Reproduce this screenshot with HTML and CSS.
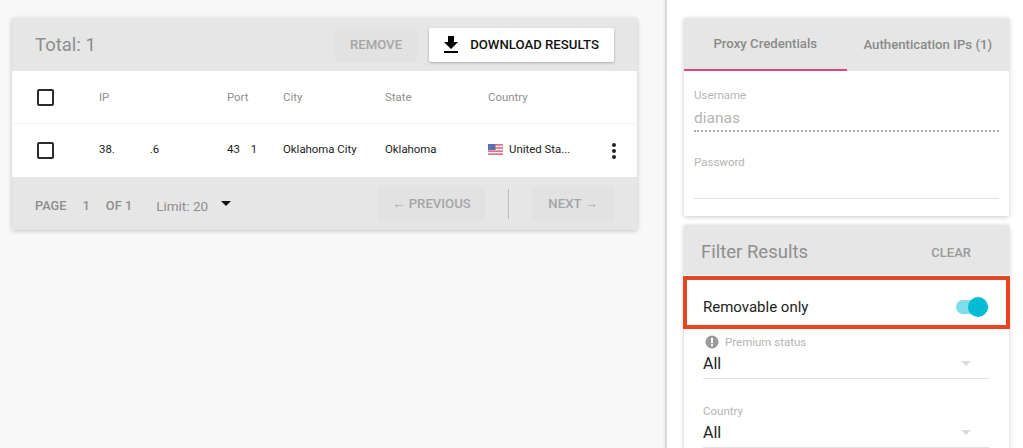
FILE: index.html
```html
<!DOCTYPE html>
<html lang="en">
<head>
    <meta charset="UTF-8">
    <meta name="viewport" content="width=device-width, initial-scale=1.0">
    <title>Proxies</title>
    <link rel="stylesheet" href="styles.css">
</head>
<body>
    <div class="layout">
        <main class="content">
            <div class="card results">
                <div class="results-head">
                    <span class="total">Total: 1</span>
                    <span class="btn btn-disabled btn-remove">REMOVE</span>
                    <span class="btn btn-download">
                        <svg class="download-icon" width="14" height="17" viewBox="0 0 14 17"><path d="M4 0h6v6h4l-7 7-7-7h4z"/><rect y="15" width="14" height="2"/></svg>
                        DOWNLOAD RESULTS
                    </span>
                </div>

                <div class="row row-head">
                    <span class="checkbox"></span>
                    <span>IP</span>
                    <span>Port</span>
                    <span>City</span>
                    <span>State</span>
                    <span>Country</span>
                </div>
                <div class="row row-body">
                    <span class="checkbox"></span>
                    <span class="ip"><span>38.</span><span>.6</span></span>
                    <span class="port"><span>43</span><span>1</span></span>
                    <span>Oklahoma City</span>
                    <span>Oklahoma</span>
                    <span class="country">
                        <svg class="flag" width="15" height="11" viewBox="0 0 15 11">
                            <rect width="15" height="11" fill="#eef0f4"/>
                            <rect y="0" width="15" height="1.6" fill="#e0707c"/>
                            <rect y="3.2" width="15" height="1.6" fill="#e0707c"/>
                            <rect y="6.4" width="15" height="1.6" fill="#e0707c"/>
                            <rect y="9.4" width="15" height="1.6" fill="#e0707c"/>
                            <rect width="7.5" height="6" fill="#5a6fb5"/>
                        </svg>
                        United Sta...
                    </span>
                    <span class="dots"><i></i><i></i><i></i></span>
                </div>

                <div class="results-foot">
                    <span class="page-label">PAGE</span>
                    <span class="page-label page-num">1</span>
                    <span class="page-label">OF 1</span>
                    <span class="limit">Limit: 20</span>
                    <span class="caret"></span>
                    <span class="btn btn-disabled btn-prev">← PREVIOUS</span>
                    <span class="foot-sep"></span>
                    <span class="btn btn-disabled btn-next">NEXT →</span>
                </div>
            </div>
        </main>

        <aside class="sidebar">
            <div class="card credentials">
                <div class="tabs">
                    <span class="tab tab-active">Proxy Credentials</span>
                    <span class="tab">Authentication IPs (1)</span>
                </div>
                <div class="cred-body">
                    <div class="cred-label">Username</div>
                    <div class="cred-value">dianas</div>
                    <div class="cred-label cred-label-pass">Password</div>
                    <div class="cred-line"></div>
                </div>
            </div>

            <div class="card filters">
                <div class="filter-head">
                    <span class="filter-title">Filter Results</span>
                    <span class="filter-clear">CLEAR</span>
                </div>
                <div class="highlight">
                    <span>Removable only</span>
                    <span class="toggle"><span class="toggle-knob"></span></span>
                </div>
                <div class="field field-first">
                    <div class="field-label">
                        <svg width="14" height="14" viewBox="0 0 14 14"><circle cx="7" cy="7" r="6.5" fill="#9a9a9a"/><rect x="6" y="3" width="2" height="5.2" fill="#fff"/><rect x="6" y="9.2" width="2" height="2" fill="#fff"/></svg>
                        Premium status
                    </div>
                    <div class="field-value">All<span class="field-caret"></span></div>
                </div>
                <div class="field">
                    <div class="field-label">Country</div>
                    <div class="field-value">All<span class="field-caret"></span></div>
                </div>
            </div>
        </aside>
    </div>
</body>
</html>
```

FILE: styles.css
```css
html, body {
    margin: 0;
    height: 100%;
    overflow: hidden;
}
body {
    font-family: 'Roboto', sans-serif;
    background-color: #f8f8f8;
    color: #212121;
}
.layout {
    display: flex;
    height: 448px;
    overflow: hidden;
}
.content {
    width: 665px;
    padding: 18px 28px 0 12px;
    box-sizing: border-box;
    flex: none;
}
.sidebar {
    flex: 1;
    background: #fff;
    padding: 18px 14px 0 17px;
    border-left: 2px solid #dcdcdc;
    box-shadow: -1px 0 2px rgba(0,0,0,0.08);
}
.card {
    background: #fff;
    border-radius: 2px;
    box-shadow: 0 1px 5px rgba(0,0,0,0.22);
}

/* results table */
.results-head, .results-foot {
    display: flex;
    align-items: center;
    height: 53px;
    background: #e6e6e6;
}
.results-head {
    padding: 0 23px 0 23px;
}
.total {
    font-size: 18.5px;
    color: #8e8e8e;
    margin-right: auto;
}
.btn {
    display: flex;
    align-items: center;
    justify-content: center;
    box-sizing: border-box;
    height: 34px;
    font-size: 13.2px;
    font-weight: 500;
    border-radius: 2px;
}
.btn-disabled {
    background: #e2e2e2;
    color: #a6a6a6;
}
.btn-remove {
    width: 82px;
    margin-right: 12px;
}
.btn-download {
    width: 185px;
    gap: 12px;
    background: #fff;
    color: #111;
    box-shadow: 0 1px 3px rgba(0,0,0,0.25);
}
.row {
    display: grid;
    grid-template-columns: 62px 128px 56px 102px 103px 1fr;
    align-items: center;
    height: 53px;
    padding-left: 25px;
    font-size: 11.4px;
    position: relative;
}
.row-head {
    color: #8f8f8f;
    border-bottom: 1px solid #f4f4f4;
    box-sizing: border-box;
}
.row-body {
    color: #222;
    line-height: 12px;
}
.row-body > span:not(.checkbox):not(.dots) {
    margin-bottom: 3px;
}
.checkbox {
    display: block;
    box-sizing: border-box;
    width: 17px;
    height: 17px;
    border: 2px solid #2b2b2b;
    border-radius: 2px;
}
.ip span:first-child {
    margin-right: 35px;
}
.port span:first-child {
    margin-right: 11px;
}
.country {
    display: flex;
    align-items: center;
    gap: 6px;
}
.flag {
    flex: none;
}
.dots {
    position: absolute;
    left: 600px;
    top: 19px;
    display: flex;
    flex-direction: column;
    gap: 2px;
}
.dots i {
    display: block;
    width: 4px;
    height: 4px;
    border-radius: 50%;
    background: #222;
}
.results-foot {
    padding: 0 23px;
    font-size: 13.5px;
    color: #8e8e8e;
}
.page-label {
    font-weight: 500;
    font-size: 12.8px;
    padding-top: 4px;
}
.page-num {
    margin: 0 16px;
}
.limit {
    margin-left: 24px;
    padding-top: 4px;
}
.caret {
    width: 0;
    height: 0;
    margin: -1px 0 0 13px;
    border-left: 5px solid transparent;
    border-right: 5px solid transparent;
    border-top: 5px solid #111;
}
.btn-prev {
    width: 107px;
    margin-left: auto;
}
.foot-sep {
    width: 1px;
    height: 30px;
    background: #bdbdbd;
    margin: 0 23px;
}
.btn-next {
    width: 82px;
}

/* credentials */
.credentials {
    height: 198px;
}
.tabs {
    display: flex;
    height: 53px;
    background: #e6e6e6;
}
.tab {
    flex: 1;
    display: flex;
    align-items: center;
    justify-content: center;
    box-sizing: border-box;
    font-size: 13.2px;
    font-weight: 500;
    color: #8a8a8a;
    white-space: nowrap;
}
.tab-active {
    border-bottom: 2px solid #e0457b;
}
.cred-body {
    padding: 17px 10px 0 10px;
}
.cred-label {
    font-size: 11.5px;
    line-height: 14px;
    color: #b4b4b4;
}
.cred-label-pass {
    margin-top: 23px;
}
.cred-value {
    font-size: 15.5px;
    line-height: 22px;
    margin-top: 5px;
    padding-bottom: 1px;
    color: #b4b4b4;
    border-bottom: 2px dotted #aaa;
}
.cred-line {
    margin-top: 29px;
    border-bottom: 1px solid #dedede;
}

/* filters */
.filters {
    margin-top: 9px;
    padding-bottom: 20px;
}
.filter-head {
    display: flex;
    align-items: center;
    justify-content: space-between;
    box-sizing: border-box;
    height: 50px;
    padding: 4px 38px 0 17px;
    background: #e6e6e6;
}
.filter-title {
    font-size: 18.5px;
    color: #8e8e8e;
}
.filter-clear {
    font-size: 13px;
    font-weight: 500;
    color: #9a9a9a;
}
.highlight {
    display: flex;
    align-items: center;
    justify-content: space-between;
    box-sizing: border-box;
    height: 53px;
    margin: 1px -1px 0;
    padding: 8px 18px 0 16px;
    border: 4px solid #e8461e;
    font-size: 15px;
    color: #222;
}
.toggle {
    position: relative;
    display: block;
    width: 32px;
    height: 14px;
    border-radius: 7px;
    background: #7fdde9;
}
.toggle-knob {
    position: absolute;
    right: 0;
    top: -3px;
    width: 20px;
    height: 20px;
    border-radius: 50%;
    background: #00bcd4;
}
.field {
    margin: 0 20px 0 19px;
    padding-top: 25px;
}
.field-first {
    padding-top: 6px;
}
.field-label {
    display: flex;
    align-items: center;
    gap: 6px;
    height: 14px;
    font-size: 11.5px;
    color: #b4b4b4;
}
.field-first .field-label svg {
    margin-left: 2px;
}
.field-value {
    display: flex;
    align-items: center;
    justify-content: space-between;
    height: 29px;
    font-size: 16px;
    color: #222;
    border-bottom: 1px solid #e0e0e0;
}
.field-caret {
    width: 0;
    height: 0;
    margin-right: 18px;
    border-left: 5px solid transparent;
    border-right: 5px solid transparent;
    border-top: 5px solid #dcdcdc;
}
```
